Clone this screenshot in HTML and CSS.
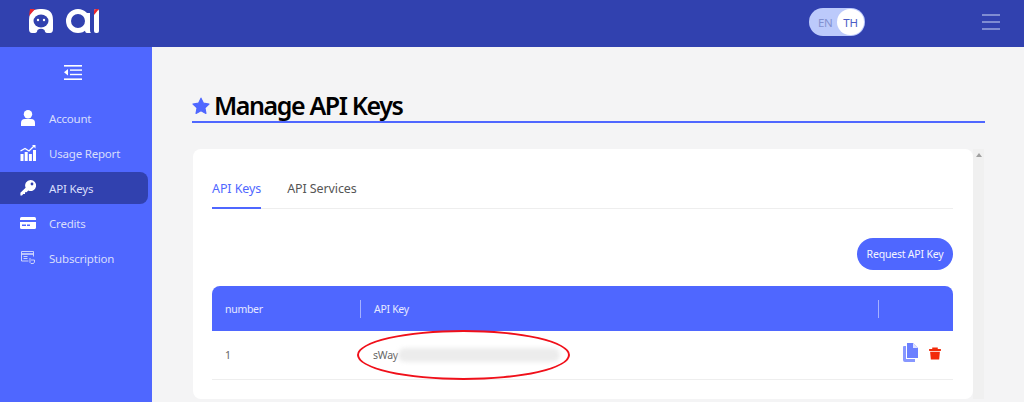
FILE: index.html
```html
<!DOCTYPE html>
<html lang="en">
<head>
<meta charset="utf-8">
<title>Manage API Keys</title>
<link rel="stylesheet" href="styles.css">
</head>
<body>
<header class="topbar">
  <svg class="logo" width="72" height="26" viewBox="0 0 72 26">
    <path d="M3 25 Q0 25 0 21 V12 Q0 1 11 1 H13 Q24 1 24 12 V21 Q24 25 21 25 H18 Q16 25 15.5 22 Q12 19.5 8.5 22 Q8 25 6 25Z" fill="#fff"/>
    <path d="M0 8 L1 1 H6 Z" fill="#e8262d"/>
    <ellipse cx="12" cy="13" rx="7.5" ry="6.5" fill="#3141af"/>
    <circle cx="9" cy="12" r="1.2" fill="#fff"/><circle cx="15" cy="12" r="1.2" fill="#fff"/>
    <circle cx="49" cy="13" r="9.5" fill="none" stroke="#fff" stroke-width="5"/>
    <path d="M56 5 H61 V22 Q61 25 62 25 H58 Q56 25 56 22Z" fill="#fff"/>
    <rect x="65" y="1" width="5" height="24" rx="2" fill="#fff"/>
    <path d="M65 7 V3 Q65 1 67 1 H70 Z" fill="#e8262d"/>
  </svg>
  <div class="lang"><span class="lang-en">EN</span><span class="lang-th">TH</span></div>
  <div class="burger"><i></i><i></i><i></i></div>
</header>
<div class="body">
  <aside class="sidebar">
    <svg class="collapse" width="18" height="15" viewBox="0 0 18 15" fill="#fff">
      <rect width="18" height="1.6"/><rect x="6" y="4.4" width="12" height="1.4"/><rect x="6" y="8.8" width="12" height="1.4"/><rect y="13.4" width="18" height="1.6"/><path d="M4 4 V10.6 L0 7.3Z"/>
    </svg>
    <nav class="nav">
      <a class="nav-item">
        <svg width="16" height="16" viewBox="0 0 16 16" fill="#fff"><circle cx="8" cy="4.2" r="4.2"/><path d="M1 16 V13 Q1 9 5 9 H11 Q15 9 15 13 V16Z"/></svg>
        <span>Account</span>
      </a>
      <a class="nav-item">
        <svg width="16" height="16" viewBox="0 0 16 16" fill="#fff"><rect x="0.5" y="9" width="3" height="7"/><rect x="4.7" y="7" width="3" height="9"/><rect x="8.9" y="9" width="3" height="7"/><rect x="13" y="5" width="3" height="11"/><path d="M0.5 6 L5 3.5 L9 6 L14 1" fill="none" stroke="#fff" stroke-width="1.3"/><path d="M12 0 H15.5 V3.5Z"/></svg>
        <span>Usage Report</span>
      </a>
      <a class="nav-item is-active">
        <svg width="16" height="16" viewBox="0 0 16 16" fill="#fff"><path d="M10.5 0 A5.5 5.5 0 1 1 8.3 10.5 L6.5 12.3 H5 V14 H3.2 L2 15.6 H0.4 V12.8 L5.6 7.7 A5.5 5.5 0 0 1 10.5 0Z"/><circle cx="12" cy="4" r="1.4" fill="#3141af"/></svg>
        <span>API Keys</span>
      </a>
      <a class="nav-item">
        <svg width="16" height="16" viewBox="0 0 16 16" fill="#fff"><path d="M0 3.5 Q0 2 1.5 2 H14.5 Q16 2 16 3.5 V5 H0Z"/><path d="M0 7 H16 V12.5 Q16 14 14.5 14 H1.5 Q0 14 0 12.5Z"/><rect x="2" y="9.5" width="4" height="1.5" fill="#4f67ff"/><rect x="7" y="9.5" width="3" height="1.5" fill="#4f67ff"/></svg>
        <span>Credits</span>
      </a>
      <a class="nav-item">
        <svg width="16" height="16" viewBox="0 0 16 16" fill="none" stroke="#d8defc" stroke-width=".9"><path d="M8.5 11 H1.5 V1.5 H13.5 V6.5"/><path d="M1.5 4 H13.5" stroke-width="1.5"/><path d="M3.5 6.5 H7.5 M3.5 8.5 H7.5"/><path d="M10 8 V12.5 L11 13.5 H13.5 L14.5 12 V10 H11"/></svg>
        <span>Subscription</span>
      </a>
    </nav>
  </aside>
  <main class="content">
    <div class="page-title">
      <svg width="18" height="18" viewBox="0 0 24 24" fill="#4f67ff"><path d="M12 1.5 L15.3 8.2 L22.7 9.3 L17.3 14.5 L18.6 21.9 L12 18.4 L5.4 21.9 L6.7 14.5 L1.3 9.3 L8.7 8.2Z" stroke="#4f67ff" stroke-width="1.5" stroke-linejoin="round"/></svg>
      <h1>Manage API Keys</h1>
    </div>
    <div class="card-row">
      <section class="card">
        <div class="tabs">
          <span class="tab is-current">API Keys</span>
          <span class="tab">API Services</span>
        </div>
        <div class="actions"><button class="request">Request API Key</button></div>
        <div class="table">
          <div class="thead">
            <div class="col-num">number</div>
            <div class="col-key">API Key</div>
            <div class="col-act"></div>
          </div>
          <div class="trow">
            <div class="col-num">1</div>
            <div class="col-key"><span>sWay</span><span class="blurred"></span></div>
            <div class="col-act">
              <svg class="copy" width="15" height="19" viewBox="0 0 15 19"><path d="M4 0 H10 L15 5 V15 H4Z" fill="#6b80ff"/><path d="M1 3 H3 V16 H12 V19 H2 Q0 19 0 17 V4 Q0 3 1 3Z" fill="#8797ff"/><path d="M10 0 L15 5 H10Z" fill="#dfe3ff"/></svg>
              <svg class="trash" width="12" height="13" viewBox="0 0 13 13" fill="#f22a0a"><rect x="0" y="1.5" width="13" height="2.2" rx=".6"/><rect x="3.5" y="0" width="6" height="2"/><path d="M1.2 4.6 H11.8 L11 13 H2Z"/></svg>
            </div>
          </div>
        </div>
      </section>
      <div class="scrollbar"><i></i></div>
    </div>
    <div class="ellipse"></div>
  </main>
</div>
</body>
</html>
```
FILE: styles.css
```css
* { box-sizing: border-box; }
html, body { margin: 0; height: 402px; overflow: hidden; }
body { font-family: "Noto Sans", "Liberation Sans", sans-serif; font-size: 12px; background: #f4f4f5; color: #555; }

.topbar { height: 47px; background: #3141af; display: flex; align-items: center; padding-left: 29px; position: relative; }
.logo { margin-top: -5px; }
.lang { margin-left: 708px; width: 56px; height: 28px; border-radius: 14px; background: #bccafb; display: flex; align-items: center; padding: 0 1px 0 9px; justify-content: space-between; margin-top: -3px; }
.lang-en { color: #8391cf; font-size: 11.5px; letter-spacing: -0.3px; }
.lang-th { width: 27px; height: 26px; border-radius: 13px; background: #fff; color: #4b5cc4; font-size: 11.5px; letter-spacing: -0.3px; display: flex; align-items: center; justify-content: center; }
.burger { margin-left: 117px; width: 18px; display: flex; flex-direction: column; gap: 5px; margin-top: -3px; }
.burger i { display: block; height: 2px; background: #7f8cd2; }

.body { display: flex; height: 355px; }
.sidebar { width: 152px; background: #4f67ff; display: flex; flex-direction: column; flex-shrink: 0; }
.collapse { margin: 18px 0 0 64px; }
.nav { margin-top: 22px; display: flex; flex-direction: column; gap: 3px; }
.nav-item { height: 32px; display: flex; align-items: center; gap: 13px; padding-left: 20px; color: #d8defc; font-size: 11.5px; letter-spacing: -0.2px; width: 148px; border-radius: 0 8px 8px 0; }
.nav-item svg { flex-shrink: 0; }
.nav-item.is-active { background: #3141af; }

.content { flex: 1; padding: 43px 39px 0 40px; position: relative; }
.page-title { display: flex; align-items: center; gap: 4px; height: 33px; border-bottom: 2px solid #4f67ff; width: 793px; }
.page-title h1 { margin: 0; font-size: 25px; font-weight: 600; color: #000; line-height: 33px; letter-spacing: -1.4px; }

.card-row { display: flex; margin-top: 26px; }
.card { width: 780px; margin-left: 1px; height: 250px; background: #fff; border-radius: 8px; padding: 19px 20px 0 19px; flex-shrink: 0; }
.scrollbar { width: 11px; background: #f0f0f0; padding-top: 4px; height: 250px; display: flex; justify-content: center; }
.scrollbar i { width: 0; height: 0; border: 3.5px solid transparent; border-top: 0; border-bottom: 4px solid #a0a0a0; }

.tabs { display: flex; gap: 26px; height: 41px; border-bottom: 1px solid #eee; }
.tab { font-size: 12.5px; letter-spacing: -0.1px; color: #555; height: 41px; line-height: 42px; }
.tab.is-current { color: #4f67ff; border-bottom: 2px solid #4f67ff; }

.actions { display: flex; justify-content: flex-end; margin-top: 29px; }
.request { width: 96px; height: 32px; border: 0; border-radius: 16px; background: #4f67ff; color: #f4f5ff; font-family: "Noto Sans", sans-serif; font-size: 10.5px; letter-spacing: -0.2px; padding: 0; }

.table { margin-top: 16px; }
.thead, .trow { display: flex; align-items: center; }
.thead { height: 45px; background: #4f67ff; border-radius: 8px 8px 0 0; color: #e6e9ff; font-size: 10.5px; letter-spacing: -0.3px; }
.trow { height: 49px; border-bottom: 1px solid #eee; font-size: 10.5px; letter-spacing: -0.2px; color: #666; }
.col-num { width: 148px; padding-left: 13px; }
.col-key { width: 518px; padding-left: 13px; display: flex; align-items: center; height: 18px; }
.thead .col-key, .thead .col-act { border-left: 1px solid #a5b1ff; }
.col-act { flex: 1; height: 18px; display: flex; align-items: center; justify-content: flex-end; gap: 11px; padding-right: 12px; }
.copy { margin-top: -6px; }
.trash { margin-top: -4px; }
.blurred { width: 162px; height: 14px; background: #ececec; border-radius: 7px; filter: blur(2px); }

.ellipse { position: absolute; left: 205px; top: 283px; width: 213px; height: 50px; border: 2px solid #f0101a; border-radius: 50%; }
```
